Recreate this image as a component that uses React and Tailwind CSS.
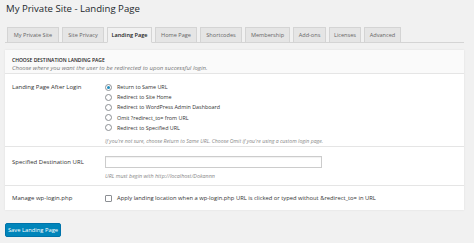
import React from "react";

const tabs = [
  ["My Private Site", "w-[52px]"],
  ["Site Privacy", "w-[42px]"],
  ["Landing Page", "w-[45px]"],
  ["Home Page", "w-[42px]"],
  ["Shortcodes", "w-[42px]"],
  ["Membership", "w-[45px]"],
  ["Add-ons", "w-[33px]"],
  ["Licenses", "w-[32px]"],
  ["Advanced", "w-[37px]"],
];
const radios = ["Return to Same URL","Redirect to Site Home","Redirect to WordPress Admin Dashboard","Omit ?redirect_to= from URL","Redirect to Specified URL"];

function Radio({ checked }) {
  return (
    <span className="w-[7px] h-[7px] rounded-full border border-[#8c8f94] bg-white flex items-center justify-center shrink-0">
      {checked && <span className="w-[3px] h-[3px] rounded-full bg-[#1e8cbe]" />}
    </span>
  );
}

export default function App() {
  return (
    <div className="w-[474px] h-[243px] bg-[#f1f1f1] overflow-hidden relative" style={{ fontFamily: '"Open Sans", "Noto Sans", sans-serif' }}>
      <div className="pl-[6px] pt-[3px] h-[24px] text-[9.6px] leading-[12px] text-[#23282d]">My Private Site - Landing Page</div>
      <div className="ml-[5px] w-[459px] mt-[2px] flex items-end gap-[3px] pl-[2px] border-b border-[#d4d4d4] h-[17px]">
        {tabs.map(([t, w]) => (
          <div key={t} className={`${w} h-[16px] -mb-px flex items-center justify-center text-[5.6px] border border-[#d4d4d4] whitespace-nowrap ${t === "Landing Page" ? "bg-[#f1f1f1] text-[#222] font-semibold border-b-[#f1f1f1]" : "bg-[#e5e5e5] text-[#666]"}`}>{t}</div>
        ))}
      </div>
      <div className="ml-[5px] mt-[7px] w-[459px] bg-white shadow-[0_0_2px_rgba(0,0,0,0.08)] text-[6px] text-[#333]">
        <div className="h-[24px] bg-[#fafafa] border-b border-[#e5e5e5] px-[7px] pt-[6px] leading-[8px]">
          <div className="text-[5px] font-semibold text-[#222] uppercase">Choose destination landing page</div>
          <div className="italic text-[#777] text-[6px]">Choose where you want the user to be redirected to upon successful login.</div>
        </div>
        <div className="h-[73px] border-b border-[#e5e5e5] flex pt-[8px]">
          <div className="w-[100px] pl-[7px] leading-[10px] shrink-0">Landing Page After Login</div>
          <div className="flex flex-col">
            {radios.map((r, i) => (
              <div key={r} className="h-[10.2px] flex items-center gap-[5px] text-[5.4px]">
                <Radio checked={i === 0} />
                <span>{r}</span>
              </div>
            ))}
            <div className="mt-[5px] italic text-[#888] text-[5.2px]">If you're not sure, choose Return to Same URL. Choose Omit if you're using a custom login page.</div>
          </div>
        </div>
        <div className="h-[39px] border-b border-[#e5e5e5] flex pt-[9px]">
          <div className="w-[100px] pl-[7px] leading-[12px] shrink-0">Specified Destination URL</div>
          <div className="flex flex-col">
            <div className="w-[217px] h-[12px] border border-[#ccc] bg-white shadow-[inset_0_1px_1px_rgba(0,0,0,0.06)]" />
            <div className="mt-[4px] italic text-[#888] text-[5.4px]">URL must begin with http://localhost/Dokannn</div>
          </div>
        </div>
        <div className="h-[24px] flex items-center">
          <div className="w-[100px] pl-[7px] shrink-0">Manage wp-login.php</div>
          <div className="flex items-center gap-[5px]">
            <span className="w-[7px] h-[7px] border border-[#8c8f94] bg-white rounded-[1px]" />
            <span className="text-[5.8px]">Apply landing location when a wp-login.php URL is clicked or typed without &amp;redirect_to= in URL</span>
          </div>
        </div>
      </div>
      <div className="ml-[5px] mt-[13px] w-[56px] h-[14px] bg-[#0085ba] border border-[#0073aa] rounded-[2px] text-white text-[5.8px] flex items-center justify-center">Save Landing Page</div>
    </div>
  );
}
